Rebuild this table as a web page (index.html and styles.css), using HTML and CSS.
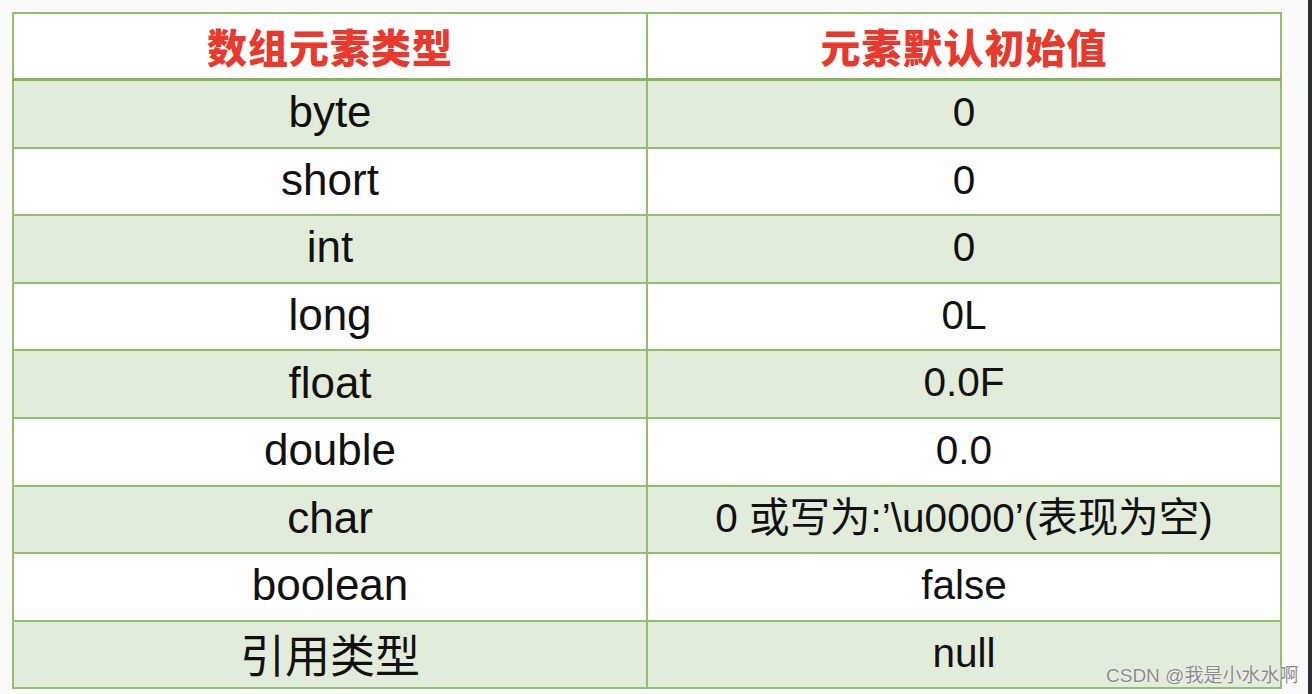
FILE: index.html
```html
<!DOCTYPE html>
<html lang="zh">
<head>
<meta charset="utf-8">
<link rel="stylesheet" href="styles.css">
<title>数组元素默认初始值</title>
</head>
<body>
<div class="page">
  <main class="canvas">
    <table class="grid">
      <thead>
        <tr class="head">
          <th>数组元素类型</th>
          <th>元素默认初始值</th>
        </tr>
      </thead>
      <tbody>
        <tr class="g"><td>byte</td><td class="v">0</td></tr>
        <tr><td>short</td><td class="v">0</td></tr>
        <tr class="g"><td>int</td><td class="v">0</td></tr>
        <tr><td>long</td><td class="v">0L</td></tr>
        <tr class="g"><td>float</td><td class="v">0.0F</td></tr>
        <tr><td>double</td><td class="v">0.0</td></tr>
        <tr class="g"><td>char</td><td class="v">0 或写为:’\u0000’(表现为空)</td></tr>
        <tr><td>boolean</td><td class="v">false</td></tr>
        <tr class="g"><td class="cjk">引用类型</td><td class="v">null</td></tr>
      </tbody>
    </table>
    <div class="mark">CSDN @我是小水水啊</div>
  </main>
  <div class="edge"></div>
</div>
</body>
</html>
```

FILE: styles.css
```css
html, body {
  margin: 0;
  padding: 0;
  height: 100%;
}
body {
  background: #fafafa;
  font-family: "Liberation Sans", Arial, "Noto Sans CJK SC", sans-serif;
  color: #111;
}
.page {
  display: flex;
  height: 694px;
  width: 1312px;
  overflow: hidden;
}
.canvas {
  position: relative;
  flex: 1;
  padding: 12px 0 0 12px;
}
.edge {
  width: 4px;
  background: #2c2f36;
}
.grid {
  border-collapse: collapse;
  width: 1270px;
  background: #fff;
}
.grid th, .grid td {
  border: 2px solid #92bf6d;
  text-align: center;
  vertical-align: middle;
  padding: 0;
  width: 50%;
}
.head th {
  height: 64px;
  font-family: "Noto Sans CJK SC", sans-serif;
  font-weight: 900;
  font-size: 40px;
  color: #e8392c;
  border-bottom: 3px solid #86b55f;
  letter-spacing: 1px;
}
.grid td {
  height: 62.6px;
  padding-bottom: 3px;
  font-size: 44px;
  line-height: 1;
}
.grid td.v {
  font-size: 40.5px;
}
.grid td.cjk {
  font-family: "Noto Sans CJK SC", sans-serif;
  font-size: 45px;
}
.grid tr.g td {
  background: #e2ecda;
}
.mark {
  position: absolute;
  left: 1106px;
  top: 660px;
  font-family: "Liberation Sans", "Noto Sans CJK SC", sans-serif;
  font-size: 19px;
  color: #8a8a8a;
  text-shadow: 0 0 2px #fff, 0 0 1px #fff;
  white-space: nowrap;
}
```
